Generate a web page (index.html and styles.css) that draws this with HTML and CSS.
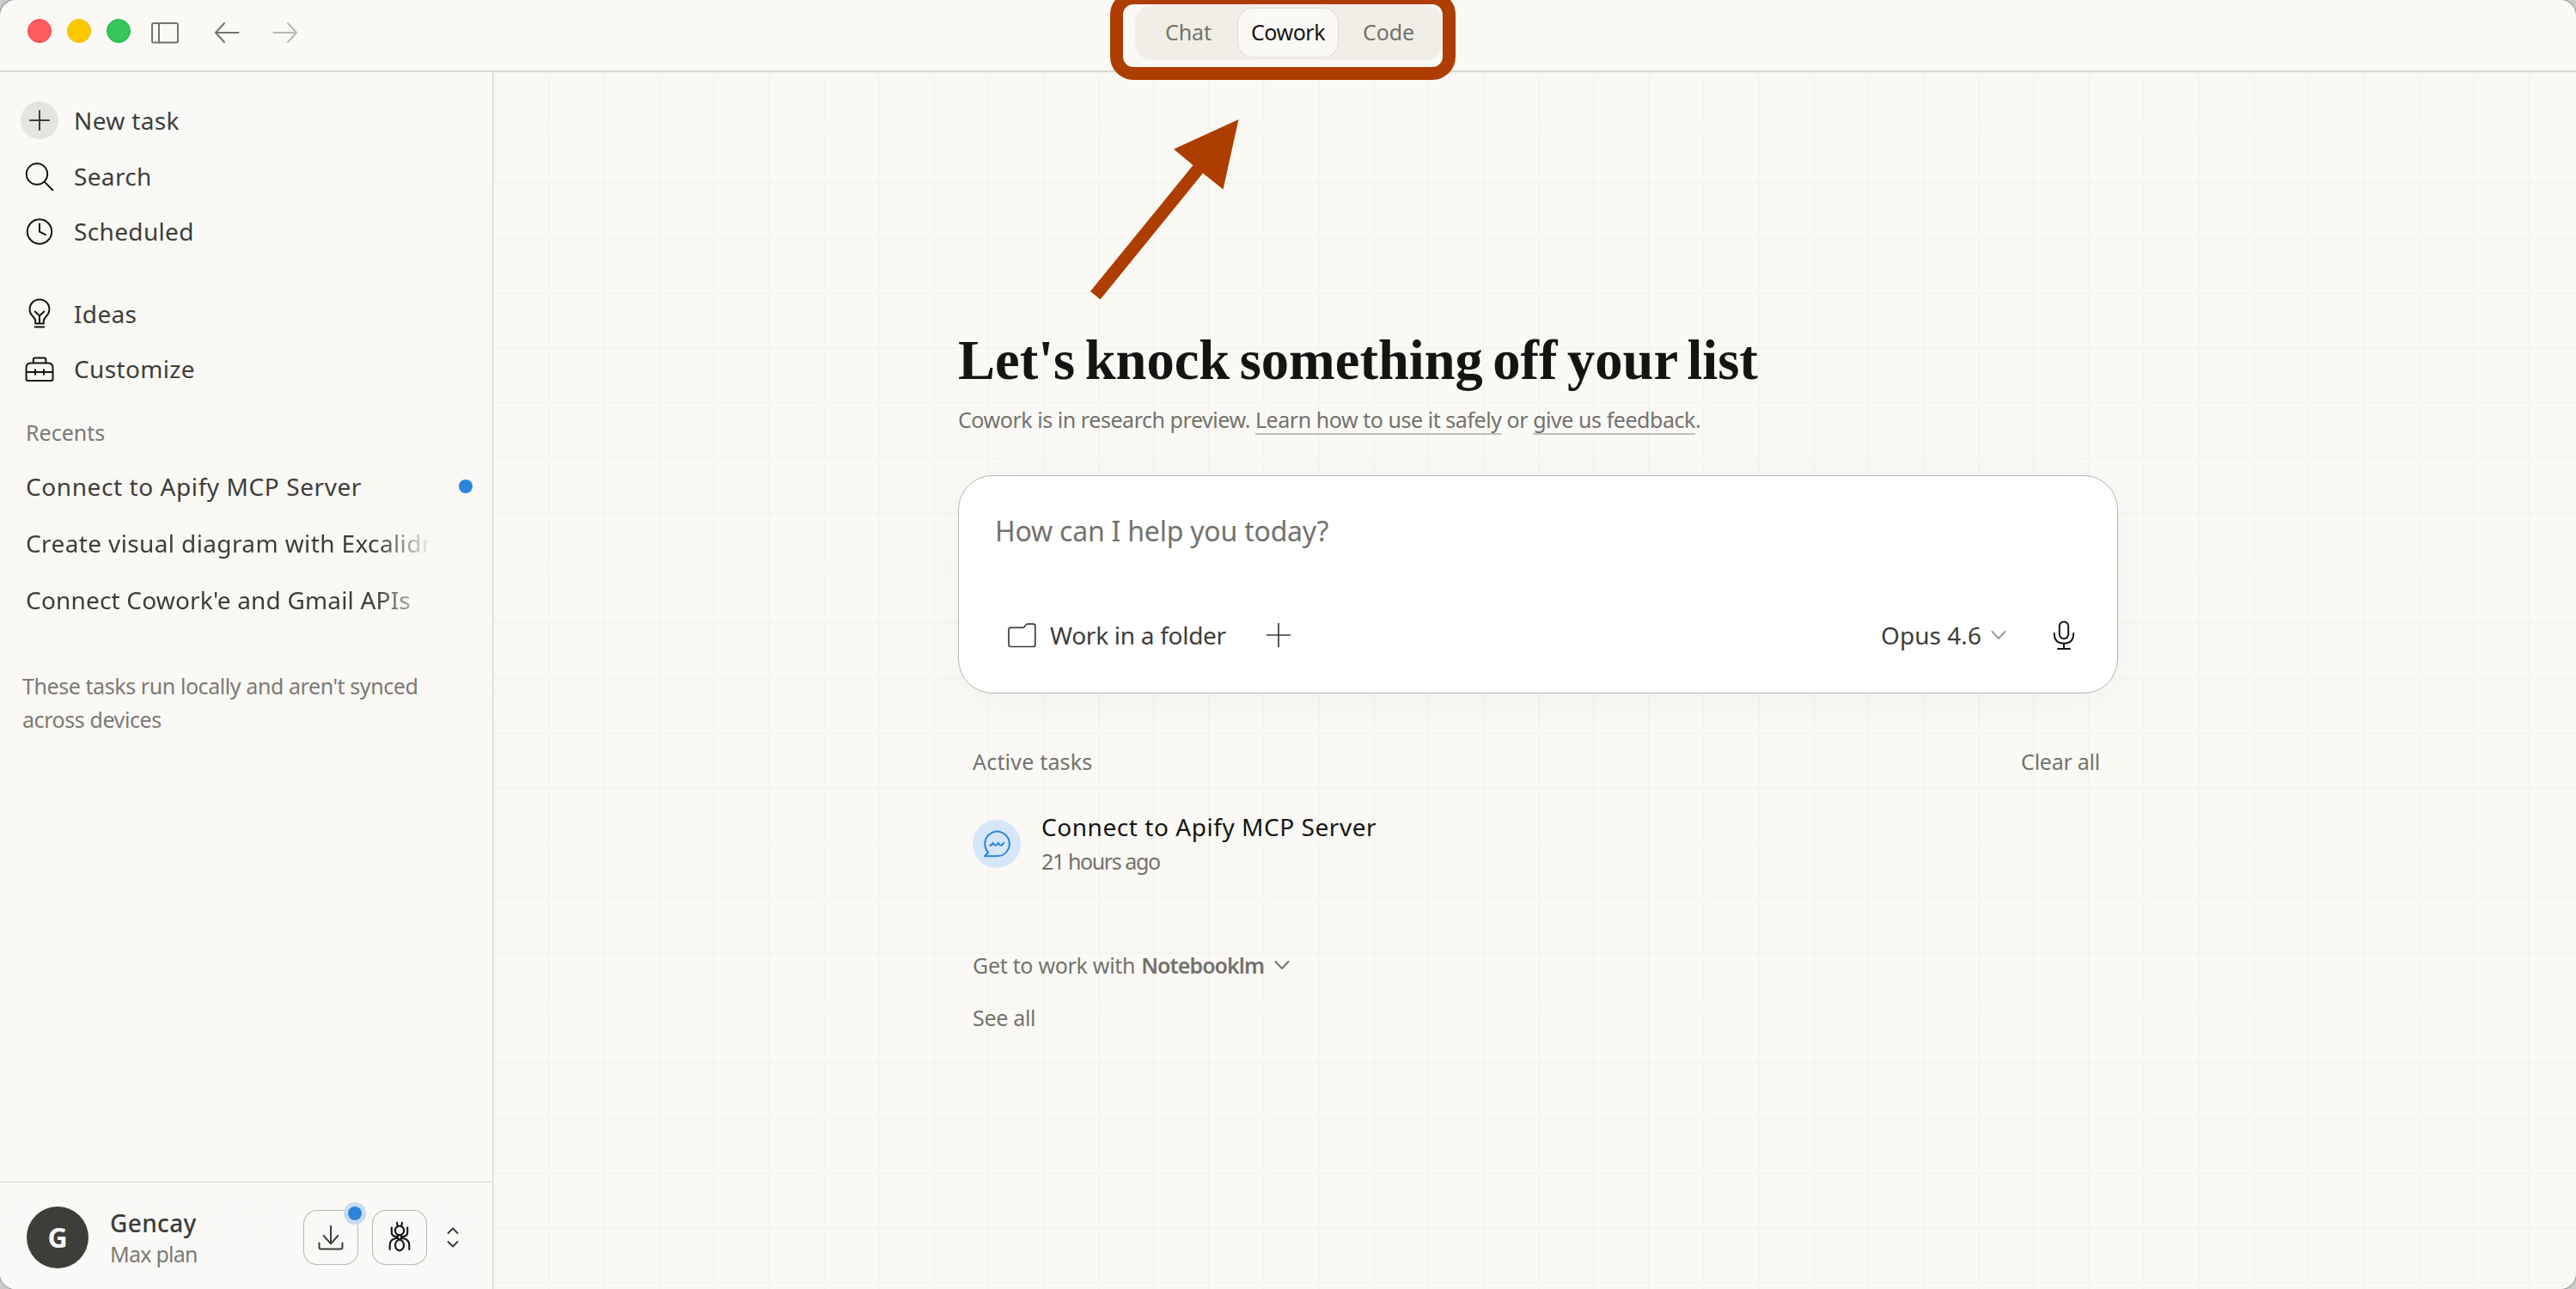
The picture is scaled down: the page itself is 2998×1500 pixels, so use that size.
FILE: index.html
```html
<!DOCTYPE html>
<html lang="en">
<head>
<meta charset="utf-8">
<title>Cowork</title>
<link rel="stylesheet" href="styles.css">
</head>
<body>
<div class="window">
  <header class="titlebar">
    <div class="window-controls">
      <span class="light light-close"></span>
      <span class="light light-minimize"></span>
      <span class="light light-zoom"></span>
      <svg class="icon panel-icon" width="36" height="28" viewBox="0 0 36 28"><rect x="3" y="3" width="30" height="22.4" rx="2"/><path d="M11 3v22.4"/></svg>
      <svg class="icon back-icon" width="32" height="28" viewBox="0 0 32 28"><path d="M29.5 14H3M13 3 3 14l10 11"/></svg>
      <svg class="icon forward-icon" width="32" height="28" viewBox="0 0 32 28"><path d="M2.5 14H29M19 3l10 11-10 11"/></svg>
    </div>
    <nav class="tabs">
      <a class="tab">Chat</a>
      <a class="tab tab-active">Cowork</a>
      <a class="tab tab-code">Code</a>
    </nav>
  </header>

  <div class="body">
    <aside class="sidebar">
      <nav class="nav">
        <a class="nav-item nav-new"><span class="nav-icon"><svg class="icon plus-badge" width="44" height="44" viewBox="0 0 44 44"><path d="M22 11v22M11 22h22"/></svg></span>New task</a>
        <a class="nav-item"><svg class="icon nav-icon" width="48" height="48" viewBox="0 0 48 48"><circle cx="21" cy="20.5" r="12.2"/><path d="m29.6 29.4 9.8 9.8"/></svg>Search</a>
        <a class="nav-item"><svg class="icon nav-icon" width="48" height="48" viewBox="0 0 48 48"><circle cx="24" cy="23.5" r="14.2"/><path d="M24 14.5v9.2l7 3.4"/></svg>Scheduled</a>
      </nav>
      <nav class="nav nav-second">
        <a class="nav-item"><svg class="icon nav-icon" width="48" height="48" viewBox="0 0 48 48"><path d="M19.2 34.5v-3c0-2-1-3.2-3-5.4a11.4 11.4 0 1 1 15.6 0c-2 2.2-3 3.4-3 5.4v3zM18.7 38.5h10.6M18.7 20.5l5.3 5 5.3-5M24 25.5v9"/></svg>Ideas</a>
        <a class="nav-item"><svg class="icon nav-icon" width="48" height="48" viewBox="0 0 48 48"><path d="M14 16.5h20q5.5 0 5.5 5.5v13q0 2-2 2h-27q-2 0-2-2V22q0-5.5 5.5-5.5zM16.800 16.5v-4q0-2 2-2h10.6q2 0 2 2v4M8.5 27h31M19 24.2v5.6M29 24.2v5.6"/></svg>Customize</a>
      </nav>

      <h2 class="recents-title">Recents</h2>
      <ul class="recents">
        <li class="recent recent-unread"><span class="recent-label">Connect to Apify MCP Server</span><span class="unread-dot"></span></li>
        <li class="recent"><span class="recent-label recent-faded">Create visual diagram with Excalidraw</span></li>
        <li class="recent recent-tight"><span class="recent-label recent-faded">Connect Cowork'e and Gmail APIs</span></li>
      </ul>
      <p class="note">These tasks run locally and aren't synced<br>across devices</p>

      <footer class="account">
        <span class="avatar">G</span>
        <div class="account-text">
          <div class="account-name">Gencay</div>
          <div class="account-plan">Max plan</div>
        </div>
        <button class="square-button">
          <svg class="icon icon-dark" width="64" height="64" viewBox="0 0 64 64"><path d="M32 18.7v20.6M23.7 30l8.3 9.3 8.3-9.3M18.5 38.5v4.8q0 2.2 2.2 2.2h22.6q2.2 0 2.2-2.2v-4.8"/></svg>
          <span class="button-badge"></span>
        </button>
        <button class="square-button">
          <svg class="icon ant-icon" width="64" height="64" viewBox="0 0 64 64"><circle cx="32" cy="24" r="5.2"/><circle cx="32" cy="31.7" r="2.4"/><ellipse cx="32" cy="41" rx="5" ry="6.3"/><path d="m29 14.8.8 4M35 14.8l-.8 4M22.8 20.5v6q0 4 6.6 4.8M41.2 20.5v6q0 4-6.6 4.8M20.7 46V40.5q0-6.5 8.8-7.7M43.3 46V40.5q0-6.5-8.8-7.7"/></svg>
        </button>
        <svg class="icon icon-dark account-toggle" width="16" height="28" viewBox="0 0 16 28"><path d="M2.5 9 8 3.5 13.5 9M2.5 19 8 24.500l5.5-5.5"/></svg>
      </footer>
    </aside>

    <main class="main">
      <h1 class="headline">Let's knock something off your list</h1>
      <p class="preview">Cowork is in research preview. <a class="link">Learn how to use it safely</a> or <a class="link">give us feedback</a>.</p>

      <section class="composer">
        <div class="placeholder">How can I help you today?</div>
        <div class="toolbar">
          <svg class="icon icon-dark icon-thin" width="36" height="32" viewBox="0 0 36 32"><path d="M5.500 7.300H19.500q1.300 0 2-1.200l1.200-1.700q.8-1.200 2.200-1.200H31.500q2.300 0 2.300 2.300V27.200q0 2.300-2.300 2.300H5.300Q3 29.500 3 27.200V9.600q0-2.300 2.500-2.300z"/></svg>
          <span class="folder-label">Work in a folder</span>
          <svg class="icon icon-dark icon-thin add-icon" width="32" height="32" viewBox="0 0 32 32"><path d="M16 2.5v27M2.5 16h27"/></svg>
          <span class="model">Opus 4.6</span>
          <svg class="icon model-chevron" width="20" height="14" viewBox="0 0 20 14"><path d="m2.5 3 7.5 8 7.5-8"/></svg>
          <svg class="icon mic-icon" width="48" height="48" viewBox="0 0 48 48"><rect x="18.8" y="8.5" width="10.4" height="19.8" rx="5.2"/><path d="M12.8 22q0 11.700 11.200 11.700T35.200 22M24 33.700v6.300M17 40h14"/></svg>
        </div>
      </section>

      <div class="tasks-header"><span class="tasks-title">Active tasks</span><a class="clear">Clear all</a></div>
      <div class="task">
        <span class="task-badge"><svg class="icon" width="56" height="56" viewBox="0 0 56 56"><path d="M14 42.3h14.5a14.3 14.3 0 1 0-10.2-4.3zM20.2 29.8q2 .2 3.200-3 1.700 3.200 3.200 3t3.200-3q1.500 3.200 3.200 3t3.200-3"/></svg></span>
        <div class="task-text">
          <div class="task-name">Connect to Apify MCP Server</div>
          <div class="task-time">21 hours ago</div>
        </div>
      </div>
      <div class="suggest">Get to work with <b class="suggest-name">Notebooklm</b>
        <svg class="icon" width="20" height="14" viewBox="0 0 20 14"><path d="m2.5 3 7.5 8 7.5-8"/></svg>
      </div>
      <a class="see-all">See all</a>
    </main>
  </div>

  <div class="callout-box"></div>
  <svg class="callout-arrow" width="180" height="216" viewBox="0 0 180 216"><path d="M176.500 4 101 38.500 123.500 57.300 4 204l11.500 9.500L135 66.500 158.500 85.500z"/></svg>
</div>
</body>
</html>
```
FILE: styles.css
```css
* { box-sizing: border-box; margin: 0; padding: 0; }

html { background: #cbcbcc; }

body {
  width: 2998px;
  height: 1500px;
  overflow: hidden;
  background: #cbcbcc;
  font-family: "Noto Sans", sans-serif;
  font-size: 25px;
  color: #73726c;
}

.window {
  position: relative;
  display: flex;
  flex-direction: column;
  height: 1500px;
  border-radius: 18px;
  overflow: hidden;
  background: #faf9f5;
  box-shadow: 0 0 0 1px #8e8e8e;
}

.icon {
  display: block;
  flex: none;
  fill: none;
  stroke: currentColor;
  stroke-width: 2;
  stroke-linecap: round;
  stroke-linejoin: round;
}
.icon-dark { color: #3d3d3a; }
.icon-thin { stroke-width: 1.7; }

/* Title bar */
.titlebar {
  flex: none;
  display: grid;
  grid-template-columns: 1fr auto 1fr;
  height: 84px;
  padding-left: 2px;
  border-bottom: 2px solid #d9d8d3;
}
.window-controls {
  display: flex;
  align-items: center;
  height: 72px;
  padding-left: 30px;
}
.light {
  width: 28px;
  height: 28px;
  margin-right: 18px;
  border-radius: 50%;
  border: 1px solid;
}
.light-close { background: #ff5c60; border-color: #fa3a44; }
.light-minimize { background: #fac800; border-color: #efbd00; }
.light-zoom { background: #35c759; border-color: #12b938; }
.panel-icon { margin: 4px 0 0 4px; }
.back-icon { margin: 4px 0 0 38px; }
.forward-icon { margin: 4px 0 0 36px; color: #b9b8b3; }

.tabs {
  display: flex;
  height: 64px;
  margin-top: 6px;
  padding: 4px;
  border-radius: 20px;
  background: #f0eee6;
}
.tab {
  width: 116px;
  height: 56px;
  line-height: 54px;
  text-align: center;
  letter-spacing: -.1px;
}
.tab-active {
  border-radius: 17px;
  background: #faf9f5;
  box-shadow: 0 0 0 1px #dedcd5;
  color: #141413;
  letter-spacing: -.45px;
}
.tab-code { width: 118px; }

/* Sidebar */
.body { display: flex; flex: 1; min-height: 0; }
.sidebar {
  display: flex;
  flex-direction: column;
  width: 574px;
  flex: none;
  padding-top: 22px;
  border-right: 1px solid #d6d5cf;
  background: linear-gradient(#faf9f5, #f8f9f5 14%, #f8f9f4 20%, #f9f8f4 27%, #faf9f5 60%, #faf9f7);
  color: #3d3d3a;
}
.nav { display: flex; flex-direction: column; }
.nav-second { margin-top: 32px; }
.nav-item {
  display: flex;
  align-items: center;
  gap: 16px;
  height: 64px;
  padding-left: 22px;
  font-size: 28px;
  letter-spacing: .35px;
}
.nav-new { height: 67px; }
.nav-icon {
  position: relative;
  top: 1px;
  width: 48px;
  color: #141413;
}
.nav-new .nav-icon { top: 0; }
.plus-badge {
  margin-left: 2px;
  border-radius: 50%;
  background: #e5e4df;
  color: #3d3d3a;
}
.recents-title {
  height: 36px;
  margin-top: 24px;
  padding-left: 30px;
  font-size: 25px;
  font-weight: 400;
  line-height: 36px;
  color: #7b7a74;
}
.recents { margin-top: 12px; list-style: none; }
.recent {
  display: flex;
  align-items: center;
  justify-content: space-between;
  height: 66px;
  padding: 0 23px 0 30px;
  font-size: 28px;
  letter-spacing: .38px;
}
.recent-unread { letter-spacing: .58px; }
.recent-tight { letter-spacing: .18px; }
.recent-label {
  width: 471px;
  white-space: nowrap;
}
.recent-faded {
  mask-image: linear-gradient(to right, #000 410px, rgba(0, 0, 0, .2) 462px, transparent);
}
.unread-dot {
  width: 16px;
  height: 16px;
  border-radius: 50%;
  background: #2c84db;
}
.note {
  margin-top: 48px;
  padding-left: 26px;
  line-height: 39px;
  letter-spacing: -.42px;
  color: #7b7a74;
}

.account {
  display: flex;
  align-items: center;
  height: 125px;
  margin-top: auto;
  padding: 3px 0 0 31px;
  border-top: 1px solid #d6d5cf;
}
.avatar {
  width: 72px;
  height: 72px;
  border-radius: 50%;
  background: #3d3d3a;
  color: #faf9f5;
  font-size: 32px;
  font-weight: 700;
  line-height: 72px;
  text-align: center;
}
.account-text {
  width: 222px;
  margin: 2px 0 0 25px;
  line-height: 36px;
}
.account-name { font-size: 28px; font-weight: 500; letter-spacing: .35px; }
.account-plan { letter-spacing: -.75px; color: #7b7a74; }
.square-button {
  position: relative;
  width: 64px;
  height: 64px;
  margin-left: 3px;
  border: 0;
  border-radius: 16px;
  box-shadow: inset 0 0 0 1px #b8b7b3;
  background: none;
}
.square-button + .square-button { margin-left: 16px; }
.button-badge {
  position: absolute;
  top: -9px;
  right: -9px;
  width: 26px;
  height: 26px;
  border: 5px solid #c7dcf1;
  border-radius: 50%;
  background: #2c84db;
}
.ant-icon { color: #141413; stroke-width: 2.1; }
.account-toggle { margin-left: 22px; }

/* Main area */
.main {
  flex: 1;
  padding: 299px 533px 0 541px;
  background-image:
    linear-gradient(#f5f4ee 2px, transparent 2px),
    linear-gradient(to right, #f5f4ee 2px, transparent 2px);
  background-size: 64px 64px;
}
.headline {
  height: 72px;
  font-family: "Liberation Serif", serif;
  font-size: 64.5px;
  font-weight: 700;
  line-height: 73px;
  word-spacing: -4.6px;
  white-space: nowrap;
  color: #141413;
}
.preview {
  height: 36px;
  margin-top: 15px;
  line-height: 36px;
  letter-spacing: -.45px;
}
.link {
  text-decoration: underline 2px #bfbeb9;
  text-underline-offset: 6px;
  text-decoration-skip-ink: none;
}
.composer {
  display: flex;
  flex-direction: column;
  justify-content: space-between;
  width: 1350px;
  height: 254px;
  margin-top: 47px;
  padding: 42px 38px 37px 42px;
  border: 1px solid #b5b5b2;
  border-radius: 40px;
  background: #fff;
  box-shadow: 0 8px 40px rgba(0, 0, 0, .035);
}
.placeholder {
  font-size: 32px;
  line-height: 44px;
  letter-spacing: -.22px;
}
.toolbar {
  display: flex;
  align-items: center;
  height: 60px;
  padding-left: 13px;
  font-size: 28px;
  color: #3d3d3a;
}
.folder-label { width: 206px; margin-left: 15px; letter-spacing: -.28px; }
.add-icon { margin-left: 44px; }
.model { margin-left: auto; letter-spacing: .05px; }
.model-chevron { margin-left: 10px; color: #9c9b96; }
.mic-icon { margin-left: 42px; color: #141413; }

.tasks-header {
  display: flex;
  justify-content: space-between;
  height: 36px;
  margin-top: 61px;
  padding: 0 21px 0 17px;
  line-height: 36px;
}
.tasks-title { letter-spacing: .2px; }
.clear { letter-spacing: -.25px; }
.task {
  display: flex;
  align-items: center;
  gap: 24px;
  margin: 38px 0 0 17px;
}
.task-badge {
  width: 56px;
  height: 56px;
  margin-bottom: 2px;
  border-radius: 50%;
  background: #d5e6f8;
  color: #2c84db;
}
.task-name {
  font-size: 28px;
  line-height: 40px;
  letter-spacing: .55px;
  color: #141413;
}
.task-time { line-height: 41px; letter-spacing: -1.4px; }
.suggest {
  display: flex;
  align-items: center;
  height: 36px;
  margin: 82px 0 0 17px;
  line-height: 36px;
  letter-spacing: -.3px;
}
.suggest-name { margin: 0 11px 0 7px; font-weight: 600; letter-spacing: -.95px; }
.see-all {
  display: block;
  margin: 25px 0 0 17px;
  line-height: 36px;
  letter-spacing: -.3px;
}

/* Callout drawn over the tab switcher */
.callout-box {
  position: absolute;
  top: -10px;
  left: 1292px;
  width: 402px;
  height: 103px;
  border: 15px solid #ae3d00;
  border-radius: 27px;
}
.callout-arrow {
  position: absolute;
  top: 135px;
  left: 1265px;
  fill: #ae3d00;
}
```
